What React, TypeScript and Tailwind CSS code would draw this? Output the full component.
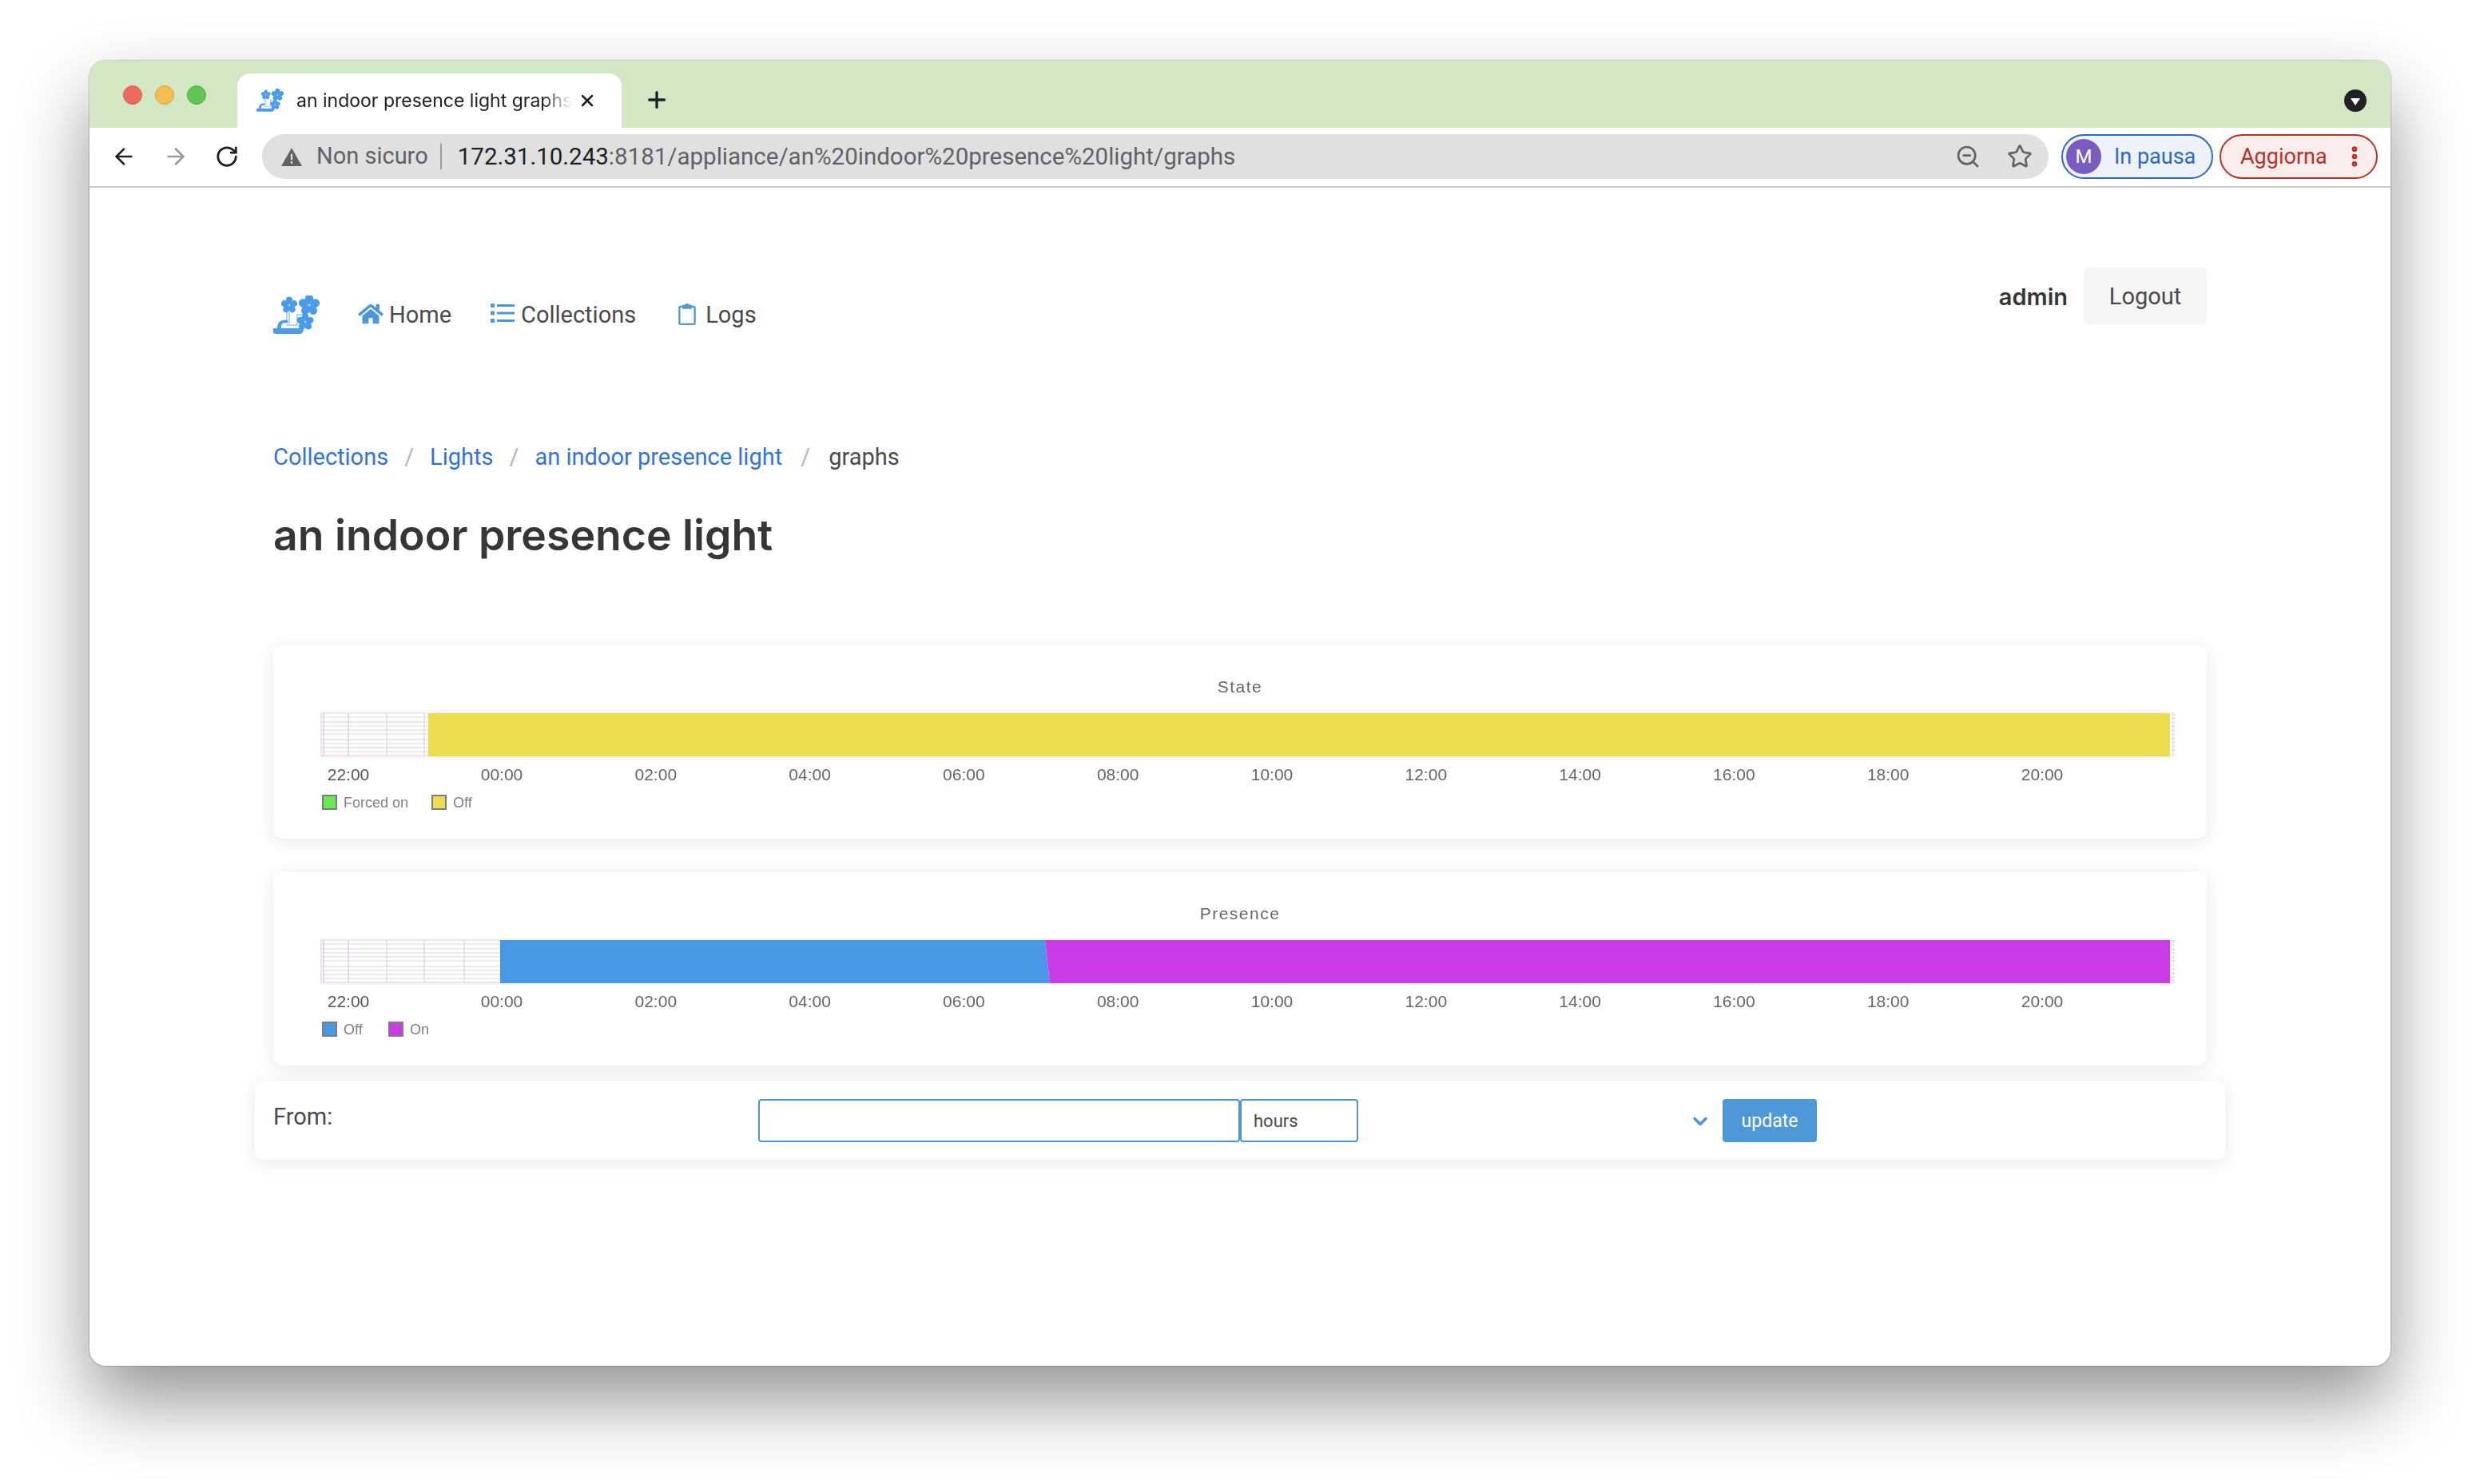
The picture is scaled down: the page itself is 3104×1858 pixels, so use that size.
import { ArrowLeft, ArrowRight, ChevronDown, MoreVertical, Plus, RotateCw, Star, X, ZoomOut } from "lucide-react";

const SANS = "font-['Roboto',sans-serif]";

function Flower({ x, y, r }: { x: number; y: number; r: number }) {
  const petals = [0, 72, 144, 216, 288];
  return (
    <g transform={`translate(${x} ${y})`}>
      {petals.map((a) => (
        <ellipse key={a} cx={0} cy={-r * 0.62} rx={r * 0.4} ry={r * 0.42} transform={`rotate(${a})`} fill="#4a9be8" />
      ))}
      <circle r={r * 0.3} fill="#4a9be8" />
      <circle r={r * 0.12} fill="#b9d9f7" />
    </g>
  );
}

function Logo({ className }: { className: string }) {
  return (
    <svg viewBox="0 0 58 49" className={className}>
      <path d="M13 34h7V20M16 37h14V24h7M13 31h4V20" fill="none" stroke="#9cc9f4" strokeWidth="1.6" />
      <Flower x={20} y={12} r={10} />
      <Flower x={45} y={12} r={13} />
      <Flower x={40} y={33} r={10.5} />
      <path d="M5 41c0-6 3-10 8-10h5v3h-4c-3 0-4 3-4 7z" fill="#4a9be8" />
      <path d="M0 41h38v3l-3 4H3l-3-1z" fill="#4a9be8" />
    </svg>
  );
}

const HOURS = ["00:00", "02:00", "04:00", "06:00", "08:00", "10:00", "12:00", "14:00", "16:00", "18:00", "20:00"];
const ROW_LINES = [0, 5, 11, 16, 21, 26, 33, 38, 43, 48, 53];

type Seg = { points: string; fill: string };

function Chart({
  title,
  segments,
  gridEnd,
  verticals,
  legend,
}: {
  title: string;
  segments: Seg[];
  gridEnd: number;
  verticals: number[];
  legend: { x: number; label: string; fill: string }[];
}) {
  // coordinates are card-local: card starts at x=342
  return (
    <svg viewBox="0 0 2420 242" className="block h-[242px] w-[2420px] blur-[0.6px]" fontFamily="'Liberation Sans', sans-serif">
      <text x={1210} y={59} textAnchor="middle" fontSize={21} fill="#666" letterSpacing={1.5}>
        {title}
      </text>
      <g transform="translate(60 85)">
        <rect x={0} y={0} width={gridEnd} height={54} fill="#fff" />
        {ROW_LINES.map((y, i) => (
          <line key={y} x1={0} x2={gridEnd} y1={y} y2={y} stroke={i % 2 === 0 ? "#ecdcef" : "#e6e6e6"} strokeWidth={1.5} />
        ))}
        <line x1={2318} x2={2318} y1={0} y2={54} stroke="#ecdcef" strokeWidth={4} strokeDasharray="3 2" />
        <line x1={0} x2={0} y1={0} y2={54} stroke="#ecdcef" strokeWidth={2} />
        {verticals.map((x, i) => (
          <line key={x} x1={x} x2={x} y1={0} y2={54} stroke={i < 2 ? "#e3cde6" : "#dedede"} strokeWidth={1.5} />
        ))}
        {segments.map((s) => (
          <polygon key={s.fill} points={s.points} fill={s.fill} />
        ))}
        <rect x={0} y={-1} width={2318} height={56} fill="none" stroke="#f2e6f3" strokeWidth={1} />
      </g>
      <text x={94} y={169} textAnchor="middle" fontSize={21} fill="#555">
        22:00
      </text>
      {HOURS.map((h, i) => (
        <text key={h} x={286 + i * 192.8} y={169} textAnchor="middle" fontSize={21} fill="#666">
          {h}
        </text>
      ))}
      {legend.map((l) => (
        <g key={l.label}>
          <rect x={l.x} y={188} width={17} height={17} fill={l.fill} stroke="#7d7d7d" strokeWidth={2} />
          <text x={l.x + 26} y={203} fontSize={18} fill="#808080">
            {l.label}
          </text>
        </g>
      ))}
    </svg>
  );
}

function ChartCard({ children, className }: { children: React.ReactNode; className: string }) {
  return <div className={`rounded-xl bg-white shadow-[0_4px_24px_rgba(0,0,0,0.09)] ${className}`}>{children}</div>;
}

function BrowserChrome() {
  return (
    <>
      <div className="flex h-[84px] items-end bg-[#d3e7c5] pr-[30px]">
        <div className="flex h-[68px] items-center gap-4 self-end pb-[14px] pl-[42px]">
          <span className="h-6 w-6 rounded-full border border-[#d95c50] bg-[#ee6a5f]" />
          <span className="h-6 w-6 rounded-full border border-[#d9a23f] bg-[#f5bd4f]" />
          <span className="h-6 w-6 rounded-full border border-[#52a83f] bg-[#61c454]" />
        </div>
        <div className="ml-[39px] flex h-[68px] w-[481px] items-center rounded-t-[16px] bg-white pl-6 pr-[20px]">
          <Logo className="h-[30px] w-[34px] shrink-0" />
          <span className="ml-4 w-[344px] overflow-hidden whitespace-nowrap font-['Inter',sans-serif] text-[23px] text-[#202124] [mask-image:linear-gradient(90deg,#000_90%,transparent)]">
            an indoor presence light graphs
          </span>
          <X className="ml-[8px] h-6 w-6 shrink-0 text-[#202124]" strokeWidth={2.5} />
        </div>
        <Plus className="mb-[19px] ml-[28px] h-8 w-8 text-[#202124]" strokeWidth={2.5} />
        <div className="mb-[20px] ml-auto flex h-7 w-7 items-center justify-center rounded-full bg-[#202124]">
          <span className="mt-[3px] h-0 w-0 border-x-[6px] border-t-[9px] border-x-transparent border-t-white" />
        </div>
      </div>
      <div className="flex h-[73px] items-center bg-white pb-[1px] pl-[27px] pr-4">
        <ArrowLeft className="h-8 w-8 text-[#202124]" strokeWidth={2} />
        <ArrowRight className="ml-[33px] h-8 w-8 text-[#9a9a9a]" strokeWidth={2} />
        <RotateCw className="ml-[33px] h-[30px] w-[30px] text-[#202124]" strokeWidth={2.2} />
        <div className="ml-[29px] flex h-14 grow items-center rounded-full bg-[#e0e0e0] pl-6 pr-[20px]">
          <svg viewBox="0 0 24 22" className="h-6 w-[26px] shrink-0">
            <path d="M12 1 24 22H0z" fill="#5f6368" />
            <path d="M11 8h2v7h-2zM11 16.5h2v2.5h-2z" fill="#e0e0e0" />
          </svg>
          <span className={`ml-[18px] whitespace-nowrap text-[29px] text-[#5f6368] ${SANS}`}>Non sicuro</span>
          <span className="ml-[15px] h-8 w-[2px] bg-[#9a9a9a]" />
          <span className={`ml-5 whitespace-nowrap text-[29.5px] text-[#5f6368] ${SANS}`}>
            <span className="text-[#202124]">172.31.10.243</span>:8181/appliance/an%20indoor%20presence%20light/graphs
          </span>
          <ZoomOut className="ml-auto h-8 w-8 text-[#5f6368]" strokeWidth={2} />
          <Star className="ml-[33px] h-8 w-8 text-[#5f6368]" strokeWidth={2} />
        </div>
        <div className="ml-4 flex h-14 w-[190px] shrink-0 items-center rounded-full border-2 border-[#2a68c9] bg-[#eef3fb] pl-[4px]">
          <span className={`flex h-11 w-11 items-center justify-center rounded-full bg-[#7a5cc0] text-[24px] text-white ${SANS}`}>M</span>
          <span className={`ml-4 text-[27px] text-[#2a68c9] ${SANS}`}>In pausa</span>
        </div>
        <div className="ml-2 flex h-14 w-[198px] shrink-0 items-center rounded-full border-2 border-[#b93125] bg-[#faeeec] pl-6">
          <span className={`text-[27px] text-[#b93125] ${SANS}`}>Aggiorna</span>
          <MoreVertical className="ml-[18px] h-8 w-8 text-[#b93125]" strokeWidth={3} />
        </div>
      </div>
      <div className="h-[2px] bg-[#cbcbcb]" />
    </>
  );
}

function NavLink({ icon, label, className }: { icon: React.ReactNode; label: string; className: string }) {
  return (
    <a className={`flex items-center text-[29px] text-[#4a4a4a] ${className}`}>
      {icon}
      {label}
    </a>
  );
}

export default function App() {
  return (
    <div className="flex h-[1858px] w-[3104px] items-start justify-center bg-white pt-[76px] font-['Roboto',sans-serif]">
      <div className="h-[1634px] w-[2880px] overflow-hidden rounded-[20px] bg-white shadow-[0_44px_90px_rgba(0,0,0,0.42),0_0_2px_rgba(0,0,0,0.5)]">
        <BrowserChrome />
        <div className="mx-auto w-[2420px] pt-[100px]">
          <header className="flex items-start justify-between">
            <nav className="flex h-[71px] items-center pt-[48px]">
              <Logo className="h-[49px] w-[58px]" />
              <div className="ml-[48px] flex items-center gap-[49px]">
                <NavLink
                  className="gap-[7px]"
                  label="Home"
                  icon={
                    <svg viewBox="0 0 576 512" className="-mt-[3px] h-7 w-8 fill-[#4f98d8]">
                      <path d="M280 148 96 300v164c0 9 7 16 16 16l112-.3c9 0 16-7 16-16V368c0-9 7-16 16-16h64c9 0 16 7 16 16v96c0 9 7 16 16 16l112 .3c9 0 16-7 16-16V300L296 148c-5-4-11-4-16 0zM572 251l-84-69V44c0-7-5-12-12-12h-56c-7 0-12 5-12 12v72l-90-74c-18-15-43-15-61 0L4 251c-5 4-6 12-2 17l26 31c4 5 12 6 17 2L280 107c5-4 11-4 16 0l235 194c5 4 13 3 17-2l26-31c4-5 3-13-2-17z" />
                    </svg>
                  }
                />
                <NavLink
                  className="gap-[8px]"
                  label="Collections"
                  icon={
                    <svg viewBox="0 0 30 28" className="-mt-[5px] h-7 w-[30px] fill-[#4f98d8]">
                      <rect x="0" y="2" width="5" height="5" rx="1" />
                      <rect x="0" y="11.5" width="5" height="5" rx="1" />
                      <rect x="0" y="21" width="5" height="5" rx="1" />
                      <rect x="8" y="3" width="22" height="3" />
                      <rect x="8" y="12.5" width="22" height="3" />
                      <rect x="8" y="22" width="22" height="3" />
                    </svg>
                  }
                />
                <NavLink
                  className="ml-1 gap-[12px]"
                  label="Logs"
                  icon={
                    <svg viewBox="0 0 24 30" className="-mt-[3px] h-[30px] w-[22px] fill-none stroke-[#4f98d8]" strokeWidth="2.5">
                      <path d="M7 5H3a1.5 1.5 0 0 0-1.5 1.5v21A1.5 1.5 0 0 0 3 29h18a1.5 1.5 0 0 0 1.5-1.5v-21A1.5 1.5 0 0 0 21 5h-4" />
                      <path d="M7 7h10V4h-3a2 2 0 0 0-4 0H7z" fill="#4f98d8" />
                    </svg>
                  }
                />
              </div>
            </nav>
            <div className="flex items-center gap-[20px]">
              <span className="pt-[2px] font-['Inter',sans-serif] text-[29px] font-semibold text-[#363636]">admin</span>
              <button className="h-[71px] w-[154px] rounded-md bg-[#f5f5f5] pt-[2px] text-[29px] text-[#4a4a4a]">Logout</button>
            </div>
          </header>

          <ol className="mt-[148px] flex items-center text-[29px] leading-[36px]">
            <li className="text-[#3273dc]">Collections</li>
            <li className="mx-5 text-[#b5b5b5]">/</li>
            <li className="text-[#3273dc]">Lights</li>
            <li className="mx-5 text-[#b5b5b5]">/</li>
            <li className="text-[#3273dc]">an indoor presence light</li>
            <li className="mx-[23px] text-[#b5b5b5]">/</li>
            <li className="text-[#4a4a4a]">graphs</li>
          </ol>

          <h1 className="mt-11 font-['Inter',sans-serif] text-[53.5px] font-semibold leading-[72px] text-[#363636]">
            an indoor presence light
          </h1>

          <div className="mt-[102px]">
            <ChartCard className="h-[242px]">
              <Chart
                title="State"
                gridEnd={134}
                verticals={[3, 34, 82, 129]}
                segments={[{ points: "134,0 2314,0 2314,54 134,54", fill: "#ecdd4f" }]}
                legend={[
                  { x: 62, label: "Forced on", fill: "#6de854" },
                  { x: 199, label: "Off", fill: "#ecdd4f" },
                ]}
              />
            </ChartCard>
            <ChartCard className="mt-[42px] h-[242px]">
              <Chart
                title="Presence"
                gridEnd={224}
                verticals={[3, 34, 82, 129, 179]}
                segments={[
                  { points: "224,0 906,0 912,54 224,54", fill: "#4799e6" },
                  { points: "906,0 2314,0 2314,54 912,54", fill: "#c93ce6" },
                ]}
                legend={[
                  { x: 62, label: "Off", fill: "#4799e6" },
                  { x: 145, label: "On", fill: "#c93ce6" },
                ]}
              />
            </ChartCard>
            <div className="-mx-[23px] mt-[19px] flex h-[99px] items-start rounded-xl bg-white pl-[23px] shadow-[0_4px_24px_rgba(0,0,0,0.09)]">
              <label className="mt-[27px] w-[607px] text-[29px] leading-[36px] text-[#4a4a4a]">From:</label>
              <input className="mt-[23px] h-[54px] w-[603px] rounded-[4px] border-2 border-[#4a96d8] bg-white" />
              <div className="relative mt-[23px] h-[54px] w-[604px]">
                <div className="flex h-[54px] w-[148px] items-center rounded-[4px] border-2 border-[#4a96d8] pl-[15px] text-[22px] text-[#4a4a4a]">hours</div>
                <ChevronDown className="absolute right-[14px] top-[14px] h-7 w-7 text-[#4a96d8]" strokeWidth={3} />
              </div>
              <button className="mt-[23px] h-[54px] w-[118px] rounded-[4px] bg-[#4f98d8] pt-[2px] text-[23px] text-white">update</button>
            </div>
          </div>
        </div>
      </div>
    </div>
  );
}
